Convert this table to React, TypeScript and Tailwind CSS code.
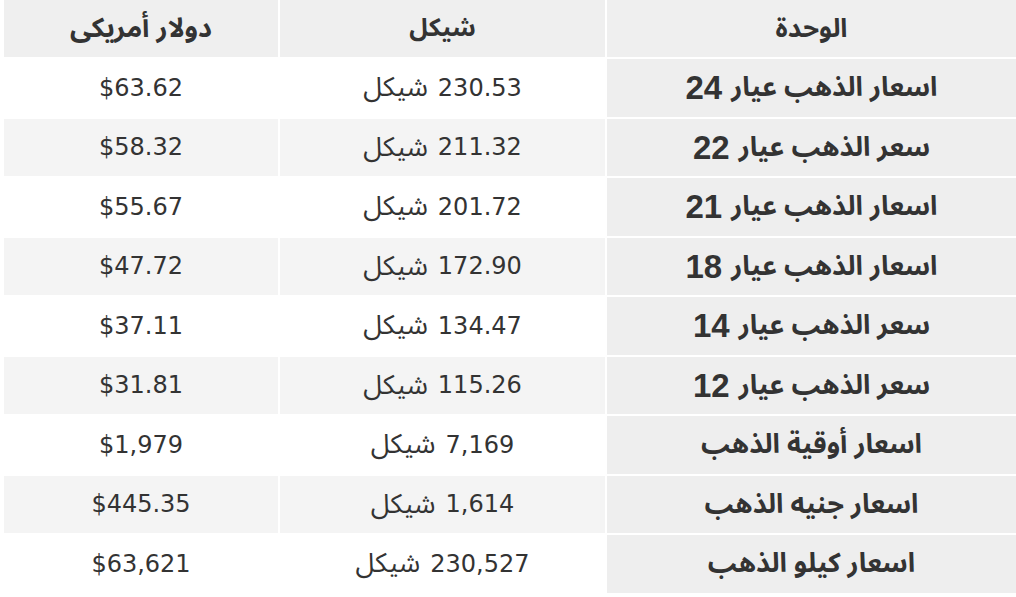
import React from "react";

const rows: [string, string, string, string, string][] = [
  ["اسعار الذهب عيار", "24", "230.53", "شيكل", "$63.62"],
  ["سعر الذهب عيار", "22", "211.32", "شيكل", "$58.32"],
  ["اسعار الذهب عيار", "21", "201.72", "شيكل", "$55.67"],
  ["اسعار الذهب عيار", "18", "172.90", "شيكل", "$47.72"],
  ["سعر الذهب عيار", "14", "134.47", "شيكل", "$37.11"],
  ["سعر الذهب عيار", "12", "115.26", "شيكل", "$31.81"],
  ["اسعار أوقية الذهب", "", "7,169", "شيكل", "$1,979"],
  ["اسعار جنيه الذهب", "", "1,614", "شيكل", "$445.35"],
  ["اسعار كيلو الذهب", "", "230,527", "شيكل", "$63,621"],
];

const ar = "font-['Noto_Sans_Arabic','DejaVu_Sans',sans-serif]";

export default function App() {
  return (
    <div className="w-[1016px] h-[597px] bg-white overflow-hidden">
      <div
        dir="rtl"
        className="ml-[4px] w-[1012px] grid grid-cols-[409px_325px_274px] grid-rows-[57px_repeat(9,57.5px)] gap-[2px] text-[#333] font-['DejaVu_Sans',Verdana,sans-serif]"
      >
        <div className={"bg-[#efefef] flex items-center justify-center font-bold text-[26px] leading-none " + ar}>
          الوحدة
        </div>
        <div className={"bg-[#efefef] flex items-center justify-center font-bold text-[25px] leading-none " + ar}>
          شيكل
        </div>
        <div className={"bg-[#efefef] flex items-center justify-center font-bold text-[27px] leading-none " + ar}>
          دولار أمريكى
        </div>
        {rows.map((r, i) => {
          const alt = i % 2 === 1;
          const bg = alt ? "bg-[#f4f4f4] " : "bg-white ";
          return (
            <React.Fragment key={i}>
              <div className="bg-[#eeeeee] flex items-center justify-center gap-[9px]">
                <span className={"font-bold text-[27px] leading-none " + ar}>{r[0]}</span>
                {r[1] && (
                  <span className="font-bold text-[33px] leading-none font-['Liberation_Sans',Arial,sans-serif]">
                    {r[1]}
                  </span>
                )}
              </div>
              <div className={bg + "flex items-center justify-center gap-[10px]"}>
                <span className="text-[24px] leading-none">{r[2]}</span>
                <span className={"text-[27px] leading-none " + ar}>{r[3]}</span>
              </div>
              <div className={bg + "flex items-center justify-center"}>
                <span dir="ltr" className="text-[24px] leading-none">{r[4]}</span>
              </div>
            </React.Fragment>
          );
        })}
      </div>
    </div>
  );
}
